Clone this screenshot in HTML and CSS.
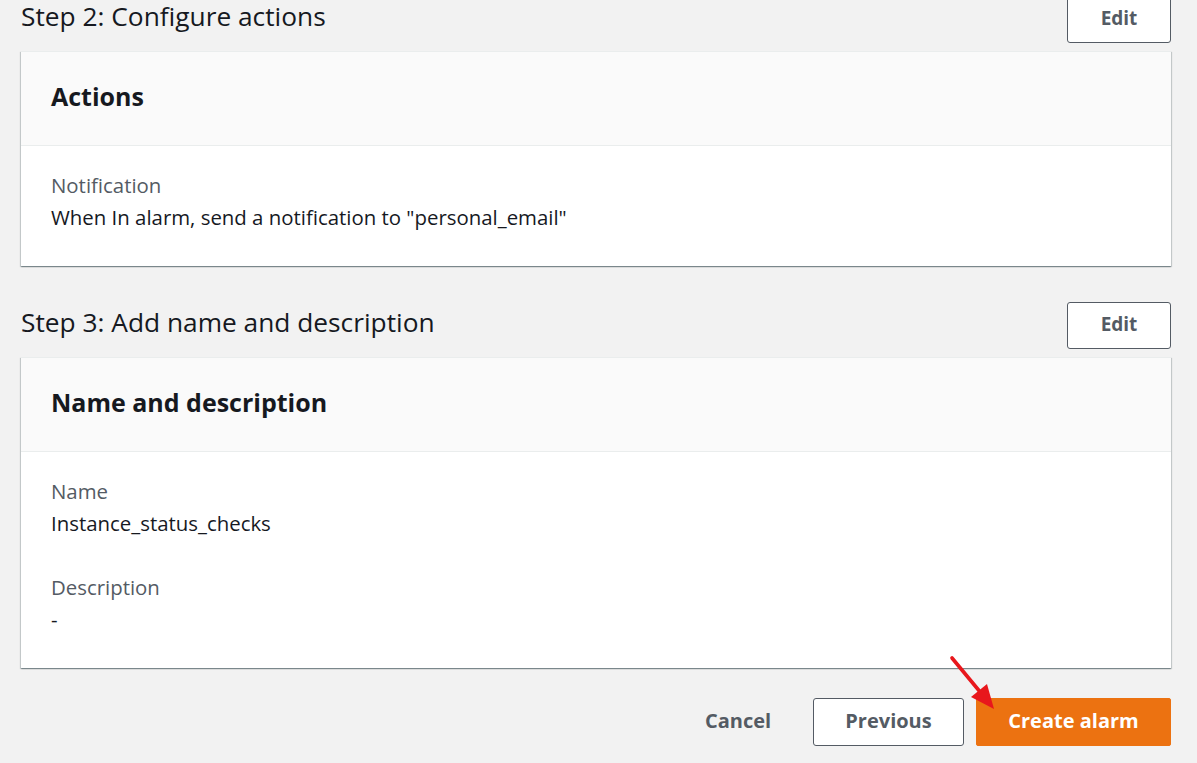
FILE: index.html
```html
<!DOCTYPE html>
<html lang="en">
<head>
<meta charset="utf-8">
<title>Create alarm - Review</title>
<link rel="stylesheet" href="styles.css">
</head>
<body>
<main class="page">
  <section class="step">
    <div class="step-head">
      <h2 class="step-title">Step 2: Configure actions</h2>
      <button class="btn btn-normal">Edit</button>
    </div>
    <div class="card">
      <div class="card-header"><h3>Actions</h3></div>
      <div class="card-body">
        <div class="field">
          <div class="label">Notification</div>
          <div class="value">When In alarm, send a notification to "personal_email"</div>
        </div>
      </div>
    </div>
  </section>

  <section class="step step-second">
    <div class="step-head">
      <h2 class="step-title">Step 3: Add name and description</h2>
      <button class="btn btn-normal">Edit</button>
    </div>
    <div class="card">
      <div class="card-header"><h3>Name and description</h3></div>
      <div class="card-body">
        <div class="field">
          <div class="label">Name</div>
          <div class="value">Instance_status_checks</div>
        </div>
        <div class="field">
          <div class="label">Description</div>
          <div class="value">-</div>
        </div>
      </div>
    </div>
  </section>

  <div class="actions">
    <button class="btn btn-link">Cancel</button>
    <button class="btn btn-normal btn-prev">Previous</button>
    <button class="btn btn-primary">Create alarm</button>
  </div>
</main>
<svg class="arrow" width="70" height="70" viewBox="0 0 70 70" aria-hidden="true">
  <line x1="3" y1="3" x2="32" y2="38" stroke="#e8171c" stroke-width="3.6" stroke-linecap="round"/>
  <polygon points="45,54 22,42 38,29" fill="#e8171c"/>
</svg>
</body>
</html>
```

FILE: styles.css
```css
* { box-sizing: border-box; }

html, body {
  margin: 0;
  padding: 0;
  background: #f2f2f2;
}

body {
  font-family: "Open Sans", "Noto Sans", sans-serif;
  color: #16191f;
  width: 1197px;
  height: 763px;
  overflow: hidden;
  position: relative;
}

.page {
  padding: 0 26px 0 21px;
  margin-top: -4px;
}

.step-second {
  margin-top: 36px;
}

.step-head {
  display: flex;
  align-items: center;
  justify-content: space-between;
  height: 47px;
  margin-bottom: 8px;
}

.step-title {
  margin: 0;
  font-size: 26.3px;
  font-weight: 400;
  line-height: 32px;
  color: #16191f;
  align-self: flex-start;
  padding-top: 4px;
}

.btn {
  font-family: inherit;
  font-weight: 700;
  font-size: 20px;
  border-radius: 3px;
  cursor: pointer;
  display: inline-flex;
  align-items: center;
  justify-content: center;
  height: 48px;
  padding: 0 0 3px;
}

.btn-normal {
  background: #ffffff;
  color: #545b64;
  border: 1px solid #545b64;
  width: 104px;
  height: 47px;
  font-size: 19px;
}

.card {
  background: #ffffff;
  border-top: 1px solid #eaeded;
  box-shadow: 0 1px 1px 0 rgba(0, 28, 36, 0.3),
              1px 1px 1px 0 rgba(0, 28, 36, 0.15),
              -1px 1px 1px 0 rgba(0, 28, 36, 0.15);
}

.card-header {
  background: #fafafa;
  height: 94px;
  border-bottom: 1px solid #eaeded;
  display: flex;
  align-items: center;
  padding: 0 30px 5px;
}

.card-header h3 {
  margin: 0;
  font-size: 25px;
  font-weight: 700;
  line-height: 32px;
  color: #16191f;
}

.card-body {
  padding: 23px 30px 33px;
  display: flex;
  flex-direction: column;
  gap: 32px;
}

.label {
  color: #545b64;
  font-size: 20.4px;
  line-height: 32px;
}

.value {
  color: #16191f;
  font-size: 20.4px;
  line-height: 32px;
}

.actions {
  display: flex;
  justify-content: flex-end;
  align-items: center;
  gap: 12px;
  margin-top: 30px;
}

.btn-link {
  background: transparent;
  border: 1px solid transparent;
  color: #545b64;
  width: 126px;
}

.btn-prev {
  width: 151px;
  height: 48px;
  font-size: 20px;
}

.btn-primary {
  background: #ec7211;
  border: 1px solid #ec7211;
  color: #ffffff;
  width: 195px;
  border-radius: 2px;
}

.arrow {
  position: absolute;
  left: 949px;
  top: 655px;
}
```
